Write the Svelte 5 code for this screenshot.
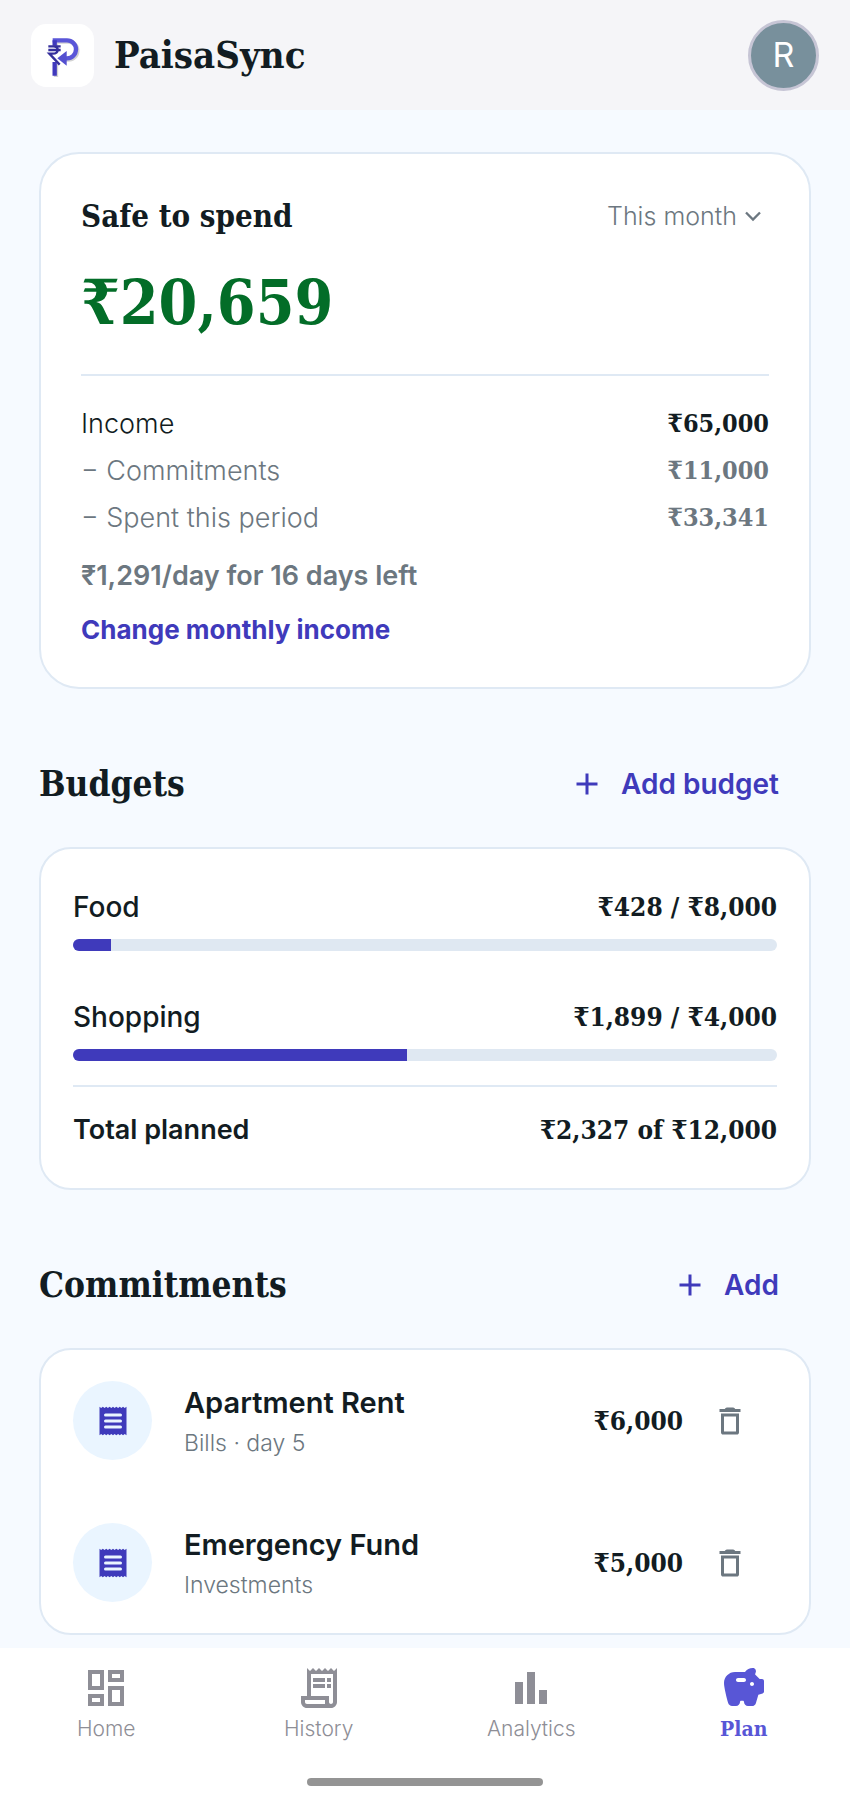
<script>
	let period = $state('This month');

	const breakdown = [
		{ label: 'Income', amount: '₹65,000', strong: true },
		{ label: '− Commitments', amount: '₹11,000' },
		{ label: '− Spent this period', amount: '₹33,341' }
	];

	const budgets = [
		{ name: 'Food', spent: 428, limit: 8000 },
		{ name: 'Shopping', spent: 1899, limit: 4000 }
	];

	const commitments = [
		{ name: 'Apartment Rent', detail: 'Bills · day 5', amount: 6000 },
		{ name: 'Emergency Fund', detail: 'Investments', amount: 5000 }
	];

	const tabs = ['Home', 'History', 'Analytics', 'Plan'];
	const active = 'Plan';

	const rupees = (n) => '₹' + n.toLocaleString('en-IN');

	const totalSpent = budgets.reduce((sum, b) => sum + b.spent, 0);
	const totalLimit = budgets.reduce((sum, b) => sum + b.limit, 0);
</script>

<svelte:head>
	<title>PaisaSync</title>
</svelte:head>

{#snippet plus()}
	<svg class="plus" viewBox="0 0 24 24" aria-hidden="true">
		<path d="M19 13h-6v6h-2v-6H5v-2h6V5h2v6h6z" />
	</svg>
{/snippet}

<div class="app">
	<header>
		<div class="brand">
			<svg class="logo" viewBox="0 0 189 189" aria-hidden="true">
				<rect width="189" height="189" rx="46" fill="#fff" />
				<g transform="translate(4 4)" opacity="0.2" fill="none" stroke="#222" stroke-width="13">
					<path d="M65 49h43a27 27 0 0 1 0 54H90M71 49v16M71 116v39" />
				</g>
				<g fill="none" stroke="#5a56d8" stroke-width="13">
					<path d="M65 49h43a27 27 0 0 1 0 54h-6" />
					<path d="M71 49v16M71 114v41" stroke="#4039bd" />
				</g>
				<path d="M79 103l28-22v44z" fill="#5450d0" />
				<path
					d="M52 67h37M52 78h37M60 67h7c18 0 18 22-2 22H55l31 33"
					fill="none"
					stroke="#352f9c"
					stroke-width="7"
				/>
			</svg>
			<h1>PaisaSync</h1>
		</div>
		<button class="avatar" aria-label="Account">R</button>
	</header>

	<main>
		<section class="card safe">
			<div class="row top">
				<h2>Safe to spend</h2>
				<label class="period">
					<select bind:value={period} aria-label="Period">
						<option>This month</option>
					</select>
					<svg viewBox="0 0 24 24" aria-hidden="true">
						<path d="M6 9l6 6 6-6" />
					</svg>
				</label>
			</div>
			<p class="total">₹20,659</p>
			<hr />
			{#each breakdown as line}
				<div class="row line" class:strong={line.strong}>
					<span>{line.label}</span>
					<span class="amount">{line.amount}</span>
				</div>
			{/each}
			<p class="per-day">₹1,291/day for 16 days left</p>
			<button class="change">Change monthly income</button>
		</section>

		<div class="row heading">
			<h2>Budgets</h2>
			<button class="add">{@render plus()}Add budget</button>
		</div>
		<section class="card budgets">
			{#each budgets as budget}
				<div class="budget">
					<div class="row">
						<span class="name">{budget.name}</span>
						<span class="amount">{rupees(budget.spent)} / {rupees(budget.limit)}</span>
					</div>
					<div class="track">
						<div class="fill" style="width: {(budget.spent / budget.limit) * 100}%"></div>
					</div>
				</div>
			{/each}
			<hr />
			<div class="row planned">
				<span>Total planned</span>
				<span class="amount">{rupees(totalSpent)} of {rupees(totalLimit)}</span>
			</div>
		</section>

		<div class="row heading">
			<h2>Commitments</h2>
			<button class="add">{@render plus()}Add</button>
		</div>
		<section class="card commitments">
			{#each commitments as item}
				<div class="commitment">
					<span class="badge">
						<svg viewBox="0 0 24 24" aria-hidden="true">
							<path
								fill="#3f3abb"
								d="M3 2.5l1.1.9 1.1-.9 1.2.9 1.1-.9 1.1.9 1.1-.9 1.2.9 1.1-.9 1.1.9 1.1-.9 1.2.9 1.1-.9 1.1.9 1.1-.9 1.1.9 1.2-.9v19l-1.2-.9-1.1.9-1.1-.9-1.1.9-1.1-.9-1.2.9-1.1-.9-1.1.9-1.1-.9-1.2.9-1.1-.9-1.1.9-1.1-.9-1.2.9-1.1-.9-1.1.9z"
							/>
							<path d="M7 8h10M7 12h10M7 16h10" stroke="#eaf5ff" stroke-width="2" stroke-linecap="round" />
						</svg>
					</span>
					<div class="info">
						<h3>{item.name}</h3>
						<p>{item.detail}</p>
					</div>
					<span class="amount">{rupees(item.amount)}</span>
					<button class="delete" aria-label="Delete {item.name}">
						<svg viewBox="0 0 24 24" aria-hidden="true">
							<path
								d="M6 19.6c0 .8.6 1.4 1.4 1.4h9.2c.8 0 1.4-.6 1.4-1.4V7H6v12.6zM8 9h8v10H8V9zM15.500 4l-.6-.6c-.2-.2-.5-.4-.8-.4H9.900c-.3 0-.6.2-.8.4l-.6.6H5v2h14V4z"
							/>
						</svg>
					</button>
				</div>
			{/each}
		</section>
	</main>

	<nav>
		<ul>
			{#each tabs as tab}
				<li>
					<a href="#{tab.toLowerCase()}" class:active={tab === active}>
						<svg viewBox="0 0 24 24" aria-hidden="true">
							{#if tab === 'Home'}
								<path
									d="M19 5v2h-4V5h4M9 5v6H5V5h4m10 8v6h-4v-6h4M9 17v2H5v-2h4M21 3h-8v6h8V3zM11 3H3v10h8V3zm10 8h-8v10h8V11zm-10 4H3v6h8v-6z"
								/>
							{:else if tab === 'History'}
								<path
									d="M19.500 3.500L18 2l-1.500 1.500L15 2l-1.500 1.500L12 2l-1.500 1.500L9 2 7.500 3.500 6 2v14H3v3c0 1.660 1.340 3 3 3h12c1.660 0 3-1.340 3-3V2l-1.500 1.500zM15 20H6c-.55 0-1-.45-1-1v-1h10v2zm4-1c0 .55-.45 1-1 1s-1-.45-1-1v-3H8V5h11v14zM9 7h6v2H9zM16 7h2v2h-2zM9 10h6v2H9zM16 10h2v2h-2z"
								/>
							{:else if tab === 'Analytics'}
								<path d="M4 9h4v11H4zM16 13h4v7h-4zM10 4h4v16h-4z" />
							{:else}
								<path
									fill-rule="evenodd"
									d="M19.830 7.500l-2.270-2.270c.07-.42.18-.81.32-1.150.14-.34.15-.75-.03-1.130C17.600 2.300 17 2 16.400 2c-1.600.03-3 .8-3.900 2h-5C4.460 4 2 6.460 2 9.500c0 2.250 1.370 7.480 2.080 10.040.24.87 1.030 1.460 1.930 1.460H8c1.100 0 2-.9 2-2 0-.4.300-.6.600-.6h.8c.3 0 .6.200.6.600 0 1.100.9 2 2 2h2.010c.88 0 1.660-.58 1.920-1.430l1.250-4.160 2.140-.72c.41-.13.68-.51.68-.94V8.500c0-.55-.45-1-1-1h-1.170zM12 9H9c-.55 0-1-.45-1-1s.45-1 1-1h3c.55 0 1 .45 1 1s-.45 1-1 1zm4 2c-.55 0-1-.45-1-1s.45-1 1-1 1 .45 1 1-.45 1-1 1z"
								/>
							{/if}
						</svg>
						{tab}
					</a>
				</li>
			{/each}
		</ul>
		<div class="handle"></div>
	</nav>
</div>

<style>
	:global(body) {
		margin: 0;
		background: #f6faff;
	}

	.app {
		--serif: 'DejaVu Serif Condensed', 'DejaVu Serif', serif;
		--ink: #121c22;
		--muted: #6c7780;
		--primary: #3f3abb;
		--line: #dfe9f4;
		display: flex;
		flex-direction: column;
		min-height: 100vh;
		background: #f6faff;
		color: var(--ink);
		font-family: Inter, sans-serif;
		font-size: 27px;
		line-height: 40px;
	}

	h1,
	h2,
	h3,
	p,
	ul {
		margin: 0;
		padding: 0;
	}

	button,
	select {
		padding: 0;
		border: 0;
		background: none;
		color: inherit;
		font: inherit;
		cursor: pointer;
	}

	svg {
		display: block;
		fill: currentColor;
	}

	hr {
		height: 2px;
		margin: 0;
		border: 0;
		background: var(--line);
	}

	header {
		display: flex;
		align-items: center;
		justify-content: space-between;
		height: 110px;
		padding: 0 31px;
		background: #f5f5f8;
	}

	.brand {
		display: flex;
		align-items: center;
		gap: 20px;
	}

	.logo {
		width: 63px;
		height: 63px;
	}

	h1 {
		font-family: var(--serif);
		font-size: 38px;
		line-height: 52px;
	}

	.avatar {
		box-sizing: border-box;
		width: 71px;
		height: 71px;
		border: 3px solid #c6c5d5;
		border-radius: 50%;
		background: #78909c;
		color: #fff;
		font-size: 34px;
	}

	main {
		padding: 42px 39px 13px;
	}

	.row {
		display: flex;
		align-items: center;
		justify-content: space-between;
	}

	.amount {
		font-family: var(--serif);
		font-size: 26px;
		font-weight: 700;
	}

	.card {
		border: 2px solid var(--line);
		border-radius: 32px;
		background: #fff;
	}

	.safe {
		padding: 40px;
		border-radius: 40px;
	}

	.top h2 {
		font-family: var(--serif);
		font-size: 31px;
		line-height: 44px;
	}

	.period {
		display: flex;
		align-items: center;
		gap: 2px;
		padding-right: 2px;
		color: var(--muted);
		font-size: 25px;
		font-weight: 300;
	}

	.period select {
		appearance: none;
	}

	.period svg {
		width: 28px;
		height: 28px;
		fill: none;
		stroke: currentColor;
		stroke-width: 2;
	}

	.total {
		margin: 25px 0 31px;
		color: #036d28;
		font-family: var(--serif);
		font-size: 62px;
		font-weight: 700;
		line-height: 80px;
	}

	.safe hr {
		margin-bottom: 24px;
	}

	.line {
		color: var(--muted);
		font-weight: 300;
		line-height: 47px;
	}

	.line .amount {
		font-size: 25px;
	}

	.strong {
		color: var(--ink);
	}

	.per-day {
		margin: 18px 0 20px;
		color: var(--muted);
		font-weight: 600;
		line-height: 34px;
	}

	.change {
		display: block;
		color: var(--primary);
		font-size: 26px;
		font-weight: 700;
		line-height: 34px;
	}

	.heading {
		margin: 65px 0 33px;
	}

	.heading h2 {
		font-family: var(--serif);
		font-size: 35px;
		line-height: 60px;
	}

	.add {
		display: flex;
		align-items: center;
		gap: 16px;
		margin-right: 32px;
		color: var(--primary);
		font-size: 28px;
		font-weight: 600;
	}

	.plus {
		width: 36px;
		height: 36px;
	}

	.budgets {
		padding: 38px 32px;
	}

	.budget + .budget {
		margin-top: 46px;
	}

	.name {
		font-size: 28px;
		font-weight: 500;
	}

	.track {
		height: 12px;
		margin-top: 12px;
		overflow: hidden;
		border-radius: 6px;
		background: #dfe8f2;
	}

	.fill {
		height: 100%;
		background: var(--primary);
	}

	.budgets hr {
		margin: 24px 0 23px;
	}

	.planned {
		font-weight: 600;
	}

	.commitments {
		display: flex;
		flex-direction: column;
		gap: 63px;
		padding: 31px 32px;
	}

	.commitment {
		display: flex;
		align-items: center;
		height: 79px;
	}

	.badge {
		display: grid;
		place-items: center;
		width: 79px;
		height: 79px;
		border-radius: 50%;
		background: #eaf5ff;
	}

	.badge svg,
	.delete svg {
		width: 36px;
		height: 36px;
	}

	.info {
		flex: 1;
		margin-left: 32px;
		padding-top: 5px;
	}

	h3 {
		font-size: 29px;
		font-weight: 600;
		line-height: 40px;
	}

	.info p {
		color: var(--muted);
		font-size: 23px;
		font-weight: 300;
		line-height: 40px;
	}

	.delete {
		margin: 0 29px;
		color: var(--muted);
	}

	nav {
		margin-top: auto;
		padding: 16px 0 20px;
		background: #fff;
	}

	nav ul {
		display: flex;
		list-style: none;
	}

	nav li {
		flex: 1;
	}

	nav a {
		display: flex;
		flex-direction: column;
		align-items: center;
		gap: 4px;
		color: #8e8e96;
		font-size: 21px;
		font-weight: 300;
		line-height: 26px;
		text-decoration: none;
	}

	nav a svg {
		width: 48px;
		height: 48px;
	}

	nav .active {
		color: #5856d6;
		font-family: var(--serif);
		font-weight: 700;
	}

	.handle {
		width: 236px;
		height: 8px;
		margin: 36px auto 0;
		border-radius: 4px;
		background: #949494;
	}
</style>
